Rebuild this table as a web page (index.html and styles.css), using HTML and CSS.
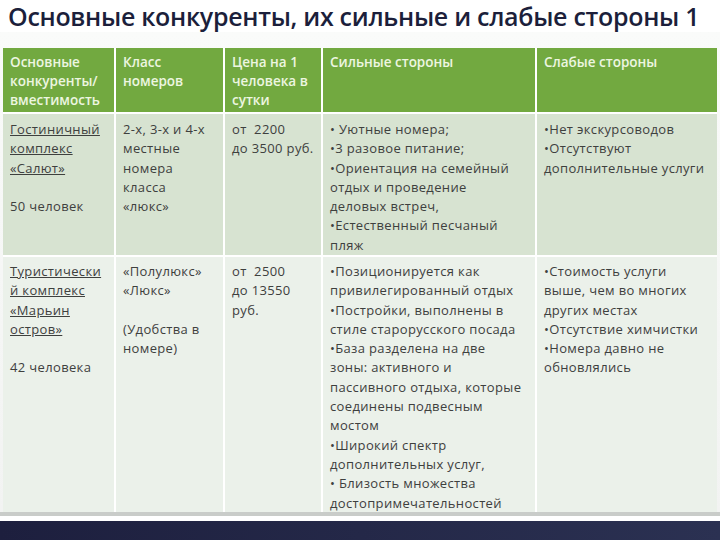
FILE: index.html
```html
<!DOCTYPE html>
<html lang="ru">
<head>
<meta charset="utf-8">
<title>Основные конкуренты</title>
<link rel="stylesheet" href="styles.css">
</head>
<body>
<div class="slide">
  <h1 class="title">Основные конкуренты, их сильные и слабые стороны 1</h1>
  <div class="frame">
    <div class="grid">
      <div class="cell head">Основные<br>конкуренты/<br>вместимость</div>
      <div class="cell head">Класс<br>номеров</div>
      <div class="cell head">Цена на 1<br>человека в<br>сутки</div>
      <div class="cell head">Сильные стороны</div>
      <div class="cell head">Слабые стороны</div>

      <div class="cell r1"><span class="u">Гостиничный<br>комплекс<br>«Салют»</span><br><br>50 человек</div>
      <div class="cell r1">2-х, 3-х и 4-х<br>местные<br>номера<br>класса<br>«люкс»</div>
      <div class="cell r1">от&nbsp; 2200<br>до 3500 руб.</div>
      <div class="cell r1">• Уютные номера;<br>•3 разовое питание;<br>•Ориентация на семейный<br>отдых и проведение<br>деловых встреч,<br>•Естественный песчаный<br>пляж</div>
      <div class="cell r1">•Нет экскурсоводов<br>•Отсутствуют<br>дополнительные услуги</div>

      <div class="cell r2"><span class="u">Туристически<br>й комплекс<br>«Марьин<br>остров»</span><br><br>42 человека</div>
      <div class="cell r2">«Полулюкс»<br>«Люкс»<br><br>(Удобства в<br>номере)</div>
      <div class="cell r2">от&nbsp; 2500<br>до 13550<br>руб.</div>
      <div class="cell r2">•Позиционируется как<br>привилегированный отдых<br>•Постройки, выполнены в<br>стиле старорусского посада<br>•База разделена на две<br>зоны: активного и<br>пассивного отдыха, которые<br>соединены подвесным<br>мостом<br>•Широкий спектр<br>дополнительных услуг,<br>• Близость множества<br>достопримечательностей</div>
      <div class="cell r2">•Стоимость услуги<br>выше, чем во многих<br>других местах<br>•Отсутствие химчистки<br>•Номера давно не<br>обновлялись</div>
    </div>
  </div>
  <div class="bar"></div>
</div>
</body>
</html>
```
FILE: styles.css
```css
html, body {
  margin: 0;
  padding: 0;
  background: #ffffff;
}
.slide {
  width: 720px;
  height: 540px;
  overflow: hidden;
  display: flex;
  flex-direction: column;
  font-family: "Open Sans", "Liberation Sans", sans-serif;
}
.title {
  margin: 0;
  height: 32px;
  padding: 0 0 0 8px;
  font-size: 25px;
  font-weight: 600;
  line-height: 32px;
  color: #1c1f3b;
  white-space: nowrap;
  letter-spacing: -0.3px;
}
.frame {
  background: linear-gradient(#fafbfa, #f2f3f2);
  padding: 16px 3px 0 3px;
  border-bottom: 4px solid #c9ccc9;
}
.grid {
  display: grid;
  grid-template-columns: 111px 107px 96px 212px 180px;
  column-gap: 2px;
  row-gap: 2px;
  background: #ffffff;
}
.cell {
  padding: 6px 2px 4px 7px;
  font-size: 13px;
  line-height: 19.3px;
  color: #3e403e;
  white-space: nowrap;
  letter-spacing: 0.35px;
}
.head {
  background: #72a940;
  color: #edf6e0;
  font-weight: 600;
  font-size: 13.5px;
  height: 64px;
  box-sizing: border-box;
  line-height: 19px;
  padding-top: 5px;
  letter-spacing: 0;
}
.r1 {
  background: #d7e3d1;
  height: 141px;
  box-sizing: border-box;
}
.r2 {
  background: #ebf1ea;
  height: 255px;
  box-sizing: border-box;
  padding-top: 5px;
}
.u {
  text-decoration: underline;
}
.bar {
  margin-top: 5px;
  flex: 1;
  background: linear-gradient(90deg, #1d1f3e 0%, #242848 50%, #2b3152 100%);
}
```
